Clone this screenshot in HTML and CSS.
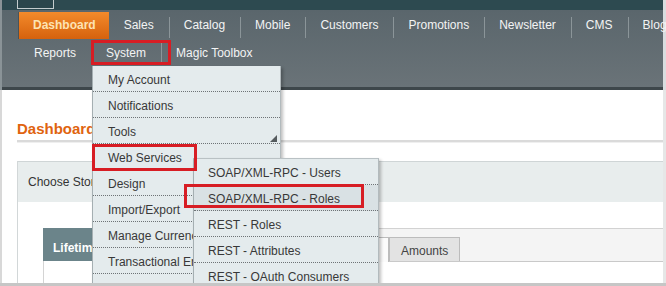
FILE: index.html
```html
<!DOCTYPE html>
<html lang="en">
<head>
    <meta charset="UTF-8">
    <title>Magento Admin - System Menu</title>
    <link rel="stylesheet" href="styles.css">
</head>
<body>
    <div class="frame">
        <div class="header">
            <div class="topbar"><div class="logo-box"></div></div>
            <div class="nav">
                <ul class="nav-row nav-row-main">
                    <li class="active"><a href="#">Dashboard</a></li>
                    <li><a href="#">Sales</a></li>
                    <li><a href="#">Catalog</a></li>
                    <li><a href="#">Mobile</a></li>
                    <li><a href="#">Customers</a></li>
                    <li><a href="#">Promotions</a></li>
                    <li><a href="#">Newsletter</a></li>
                    <li><a href="#">CMS</a></li>
                    <li><a href="#">Blog</a></li>
                </ul>
                <ul class="nav-row nav-row-second">
                    <li><a href="#">Reports</a></li>
                    <li><a href="#">System</a></li>
                    <li><a href="#">Magic Toolbox</a></li>
                </ul>
            </div>
        </div>

        <div class="content">
            <div class="page-head">
                <h3>Dashboard</h3>
            </div>
            <div class="dash-body">
                <div class="store-switcher">Choose Store View:</div>
                <div class="panel">
                    <div class="panel-left">
                        <div class="lifetime-head">Lifetime Sales</div>
                        <div class="lifetime-body"></div>
                    </div>
                    <div class="panel-right">
                        <div class="tabs">
                            <span class="tab tab-active">Orders</span>
                            <span class="tab">Amounts</span>
                        </div>
                    </div>
                </div>
            </div>
        </div>

        <!-- System dropdown -->
        <ul class="dropdown">
            <li><a href="#">My Account</a></li>
            <li><a href="#">Notifications</a></li>
            <li class="has-sub"><a href="#">Tools
                <svg class="sub-arrow" width="7" height="7" viewBox="0 0 7 7"><polygon points="7,0 7,7 0,7" fill="#555b5e"/></svg></a></li>
            <li><a href="#">Web Services</a></li>
            <li><a href="#">Design</a></li>
            <li><a href="#">Import/Export</a></li>
            <li><a href="#">Manage Currency Rates</a></li>
            <li><a href="#">Transactional Emails</a></li>
            <li><a href="#">Custom Variables</a></li>
        </ul>

        <!-- Web Services submenu -->
        <ul class="dropdown submenu">
            <li><a href="#">SOAP/XML-RPC - Users</a></li>
            <li class="hover"><a href="#">SOAP/XML-RPC - Roles</a></li>
            <li><a href="#">REST - Roles</a></li>
            <li><a href="#">REST - Attributes</a></li>
            <li><a href="#">REST - OAuth Consumers</a></li>
        </ul>

        <!-- red highlight boxes -->
        <div class="mark mark-system"></div>
        <div class="mark mark-webservices"></div>
        <div class="mark mark-roles"></div>
    </div>
</body>
</html>
```

FILE: styles.css
```css
body {
    margin: 0;
    font-family: "Liberation Sans", Arial, sans-serif;
    font-size: 12px;
    background-color: #fff;
}
ul {
    list-style: none;
    margin: 0;
    padding: 0;
}
a {
    text-decoration: none;
}
.frame {
    position: relative;
    width: 666px;
    height: 286px;
    box-sizing: border-box;
    border-bottom: 3px solid #c6c6c6;
    overflow: hidden;
    display: flex;
    flex-direction: column;
}

/* header */
.header {
    border-left: 2px solid #8a9397;
    border-right: 3px solid #d9dddf;
}
.topbar {
    height: 10px;
    background-color: #2d4a50;
}
.logo-box {
    margin-left: 15px;
    width: 35px;
    height: 8px;
    border: 1px solid #c3cccd;
    border-top: none;
    background-color: #2a464c;
}
.nav {
    height: 80px;
    padding: 2px 0 0 17px;
    box-sizing: border-box;
    background: linear-gradient(#5a666c, #6a7378);
    border-bottom: 3px solid #3e474b;
}
.nav-row {
    display: flex;
    white-space: nowrap;
}
.nav-row li {
    background: linear-gradient(#8b9599, #8b9599) left 5px / 1px 21px no-repeat;
}
.nav-row a {
    display: block;
    padding: 0 15px;
    color: #f3f4f4;
}
.nav-row-main a {
    line-height: 27px;
}
.nav-row-main li:first-child,
.nav-row-main li:nth-child(2) {
    background: none;
}
.nav-row-main li.active a {
    padding: 0 13px 0 14px;
    font-weight: bold;
    color: #fde3b4;
    background: linear-gradient(#f38a2b, #d6620d);
    box-shadow: -1px 0 0 #4a5357;
}
.nav-row-second {
    margin-top: 2px;
}
.nav-row-second li {
    background-position: left 2px;
    background-size: 1px 22px;
}
.nav-row-second li:first-child {
    background: none;
}
.nav-row-second a {
    line-height: 24px;
}

/* content */
.content {
    flex: 1;
    border-left: 2px solid #d8d8d8;
    border-right: 3px solid #e6e7e7;
    padding: 30px 0 0 15px;
}
.page-head {
    border-bottom: 2px solid #dadada;
    box-shadow: 0 1px 0 #efefef;
    padding-bottom: 2px;
}
.page-head h3 {
    margin: 0;
    font-size: 15px;
    line-height: 18px;
    color: #e0640f;
}
.dash-body {
    margin-top: 19px;
    border-left: 1px solid #d2d7d8;
}
.store-switcher {
    border-top: 1px solid #cfd5d6;
    background-color: #e8eded;
    height: 40px;
    line-height: 41px;
    padding-left: 10px;
    color: #333;
}
.panel {
    display: flex;
    margin-top: 26px;
}
.panel-left {
    width: 255px;
    padding-left: 25px;
}
.lifetime-head {
    height: 33px;
    box-sizing: border-box;
    padding: 12px 10px 0;
    line-height: 16px;
    font-weight: bold;
    color: #fff;
    background-color: #6b848a;
}
.lifetime-body {
    height: 40px;
    border-left: 1px solid #d4d4d4;
}
.panel-right {
    flex: 1;
}
.tabs {
    display: flex;
    align-items: flex-end;
    height: 32px;
    padding-left: 21px;
    border-top: 1px solid #d2d2d2;
    border-bottom: 1px solid #c9c9c9;
    background-color: #f4f4f4;
}
.tab {
    height: 24px;
    padding: 3px 11px 0;
    box-sizing: border-box;
    line-height: 20px;
    color: #444;
    background-color: #e3e3e3;
    border: 1px solid #bcbcbc;
    border-bottom: none;
}
.tab-active {
    width: 70px;
    background-color: #fbfbfb;
    height: 25px;
    margin-bottom: -1px;
}

/* dropdown menus */
.dropdown {
    position: absolute;
    left: 92px;
    top: 66px;
    width: 187px;
    background-color: #e4ebed;
    border-left: 1px solid #a5afb2;
    border-right: 1px solid #b2babd;
    box-shadow: 2px 2px 3px rgba(0,0,0,0.25);
}
.dropdown li {
    border-bottom: 1px dotted #6e7376;
}
.dropdown a {
    display: flex;
    height: 22px;
    padding: 3px 0 0 15px;
    line-height: 22px;
    color: #383838;
    white-space: nowrap;
    overflow: hidden;
}
.sub-arrow {
    margin: auto 3px 1px auto;
}
.submenu {
    left: 193px;
    top: 158px;
    width: 184px;
    border-top: 1px solid #b9c1c4;
}
.submenu a {
    padding-left: 14px;
}
.submenu li.hover {
    background-color: #d9e1e4;
}

/* red highlight boxes */
.mark {
    position: absolute;
    box-sizing: border-box;
    border: 3px solid #d71d24;
}
.mark-system {
    left: 91px;
    top: 40px;
    width: 80px;
    height: 25px;
}
.mark-webservices {
    left: 92px;
    top: 144px;
    width: 105px;
    height: 27px;
}
.mark-roles {
    left: 184px;
    top: 184px;
    width: 180px;
    height: 24px;
}
```
